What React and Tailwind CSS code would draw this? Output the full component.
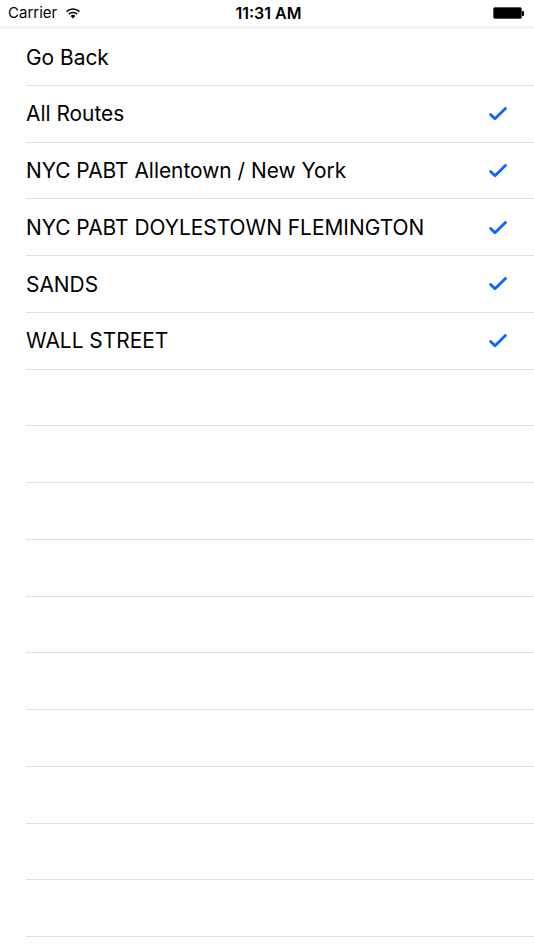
import React from "react";

const rows = [
  { label: "Go Back", check: false },
  { label: "All Routes", check: true },
  { label: "NYC PABT Allentown / New York", check: true },
  { label: "NYC PABT DOYLESTOWN FLEMINGTON", check: true },
  { label: "SANDS", check: true },
  { label: "WALL STREET", check: true },
  ...Array.from({ length: 10 }, () => ({ label: "", check: false })),
];

function Check() {
  return (
    <svg width="18" height="14" viewBox="0 0 18 14" fill="none">
      <path d="M1.6 7.4 L6 11.8 L16.4 1.6" stroke="#0a64ff" strokeWidth="2.8" strokeLinecap="round" strokeLinejoin="round" />
    </svg>
  );
}

function Wifi() {
  return (
    <svg width="16" height="12" viewBox="0 0 16 12">
      <path d="M8 11.5 L5.6 8.9 A3.5 3.5 0 0 1 10.4 8.9 Z" fill="#000" />
      <path d="M3.9 7.1 A5.9 5.9 0 0 1 12.1 7.1" stroke="#000" strokeWidth="1.6" fill="none" />
      <path d="M1.6 4.6 A9.2 9.2 0 0 1 14.4 4.6" stroke="#000" strokeWidth="1.6" fill="none" />
    </svg>
  );
}

export default function App() {
  return (
    <div className="w-[534px] h-[950px] bg-white overflow-hidden" style={{ fontFamily: "Inter, 'Liberation Sans', sans-serif" }}>
      <div className="relative h-[26px] flex items-center px-[8px] text-[15px] text-black">
        <div className="flex items-center gap-[8px]">
          <span>Carrier</span>
          <Wifi />
        </div>
        <div className="absolute left-0 right-0 top-0 h-[26px] flex items-center justify-center font-semibold text-[16px] pl-[3px]">11:31 AM</div>
        <div className="ml-auto flex items-center mr-[2px]">
          <div className="w-[29px] h-[12px] bg-black rounded-[2px] border border-[#555]" />
          <div className="w-[2px] h-[5px] bg-black rounded-r-[1px]" />
        </div>
      </div>
      <div className="h-[3px] bg-[#f4f4f4]" />
      {rows.map((r, i) => (
        <div key={i} className="h-[56.75px] pl-[26px] flex flex-col">
          <div className="flex-1 flex items-center pr-[27px] pt-[1px]">
            <span className="text-[20.9px] text-black">{r.label}</span>
            {r.check && <span className="ml-auto flex"><Check /></span>}
          </div>
          <div className="h-px bg-[#e0e0e0]" />
        </div>
      ))}
    </div>
  );
}
